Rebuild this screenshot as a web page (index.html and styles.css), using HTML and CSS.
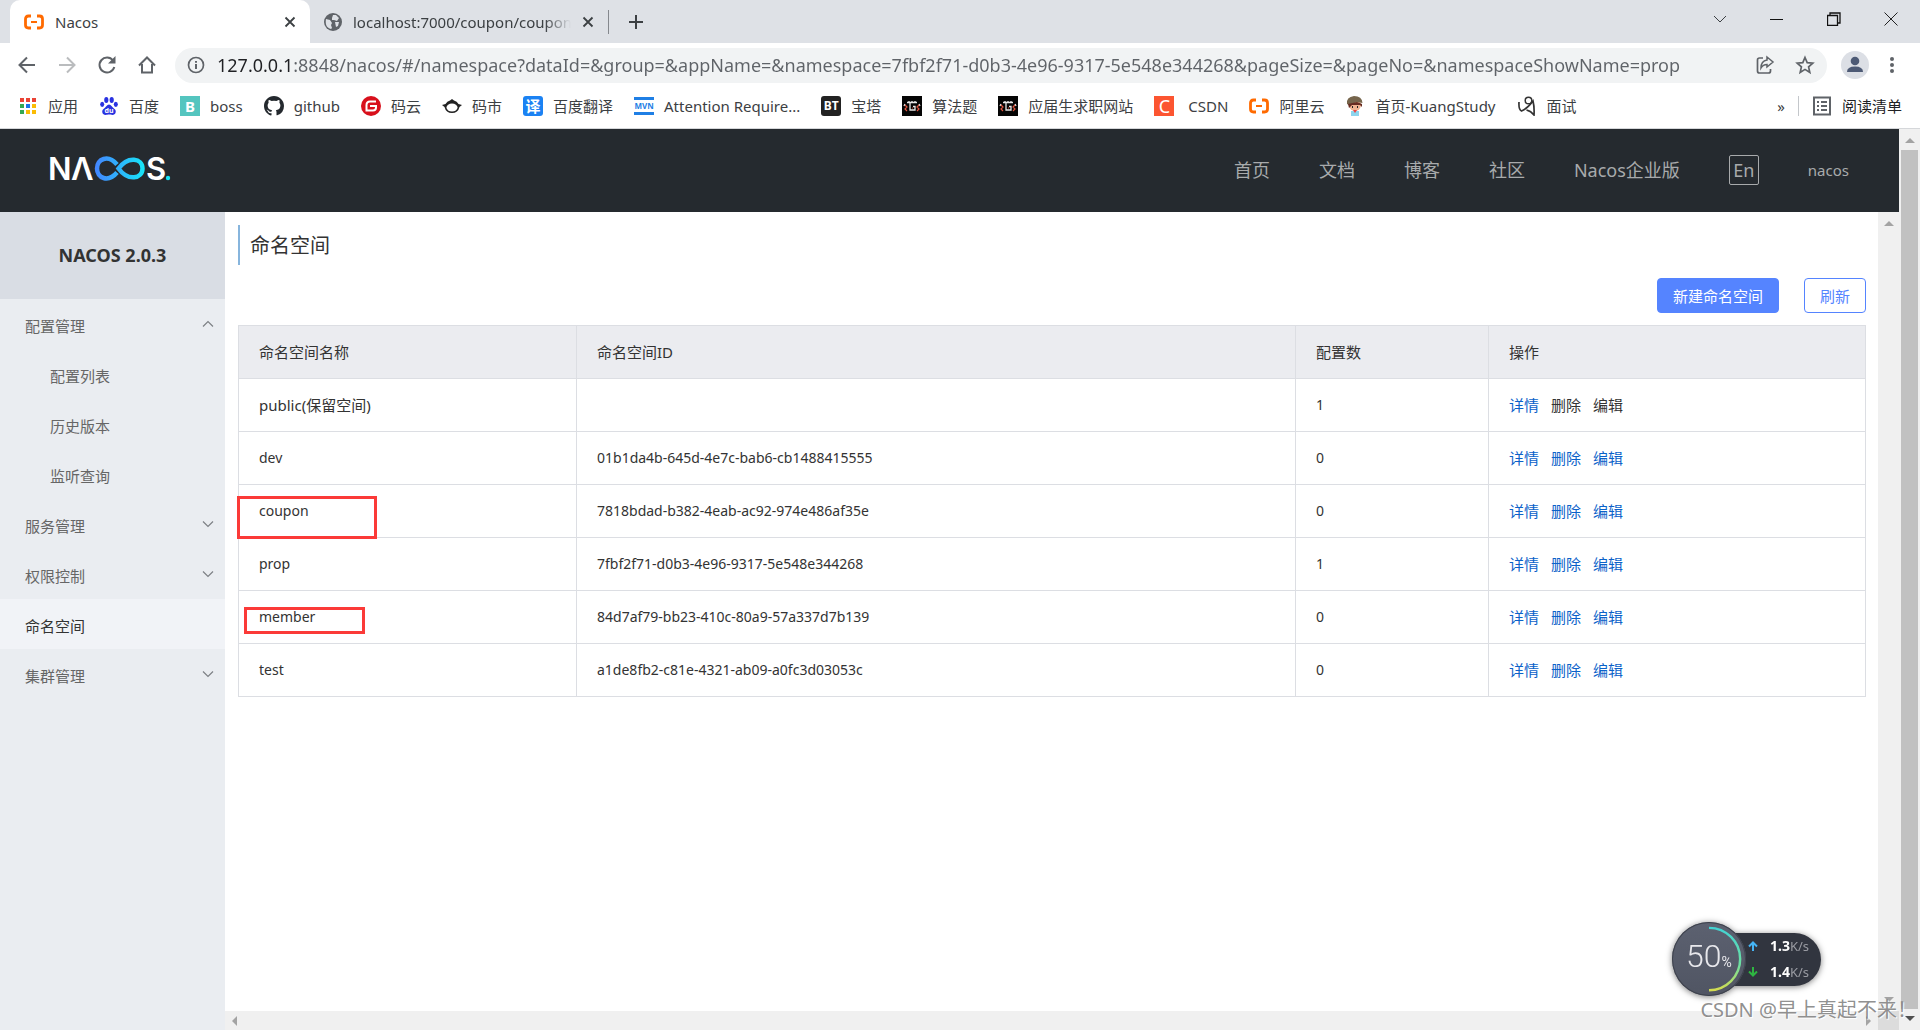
FILE: index.html
```html
<!DOCTYPE html>
<html lang="zh-CN">
<head>
<meta charset="utf-8">
<title>Nacos</title>
<link rel="stylesheet" href="styles.css">
</head>
<body>
<svg class="defs" aria-hidden="true">
  <symbol id="i-aliyun" viewBox="0 0 20 16"><path d="M7 2H4.500Q1.500 2 1.500 5v6Q1.500 14 4.500 14H7M13 2h2.500Q18.500 2 18.500 5v6Q18.500 14 15.500 14H13" fill="none" stroke="#ff6a00" stroke-width="2.800"/><path d="M7 8h6" stroke="#ff6a00" stroke-width="2"/></symbol>
  <symbol id="i-close" viewBox="0 0 12 12"><path d="M1.500 1.500l9 9m0-9l-9 9" stroke="#3c4043" stroke-width="1.800"/></symbol>
  <symbol id="i-chev" viewBox="0 0 12 8"><path d="M1 1.500l5 5 5-5" fill="none" stroke="#7d8085" stroke-width="1.200"/></symbol>
  <symbol id="i-pixel" viewBox="0 0 20 20"><path d="M0 0h20v20H0z" fill="#050505"/><path d="M5 6.500h10M7 5v2m3-2v2m3-2v2M8 7v7h5v-3.500h-2M3 8l-1 2M17 8l1 2" fill="none" stroke="#e8e8e8" stroke-width="1.300"/><path d="M3 9l2 2-2 2 2 2M17 9l-2 2 2 2-2 2M10 12h1" fill="none" stroke="#e2553f" stroke-width="1.200"/></symbol>
</svg>

<header class="browser">
  <div class="tabstrip">
    <div class="tab tab-active">
      <svg class="fav" viewBox="0 0 20 16"><use href="#i-aliyun"/></svg>
      <span class="tab-title">Nacos</span>
      <button class="plain" aria-label="关闭标签"><svg width="12" height="12"><use href="#i-close"/></svg></button>
    </div>
    <div class="tab">
      <svg class="fav globe" viewBox="0 0 18 18"><circle cx="9" cy="9" r="9" fill="#5f6368"/><path d="M2 6l4 1 2 3-1 2 1 3-1 1C3 15 1 12 2 6zM9 2l3 0 3 3-2 3-3-1-2 0 0-2zM11 9l4 0-1 4-2 1z" fill="#dee1e6"/></svg>
      <span class="tab-title fade">localhost:7000/coupon/coupon</span>
      <button class="plain" aria-label="关闭标签"><svg width="12" height="12"><use href="#i-close"/></svg></button>
    </div>
    <span class="tab-sep"></span>
    <button class="plain new-tab" aria-label="新标签页"><svg width="16" height="16" viewBox="0 0 16 16"><path d="M8 1v14M1 8h14" stroke="#3c4043" stroke-width="2"/></svg></button>
    <div class="window-buttons">
      <button class="plain" aria-label="搜索标签"><svg width="14" height="14" viewBox="0 0 14 14"><path d="M1 4l6 6 6-6" fill="none" stroke="#3c4043"/></svg></button>
      <button class="plain" aria-label="最小化"><svg width="14" height="14" viewBox="0 0 14 14"><path d="M0 7.500h13" stroke="#111"/></svg></button>
      <button class="plain" aria-label="还原"><svg width="14" height="14" viewBox="0 0 14 14"><path d="M.5 3.500h10v10H.5zM3 3.500V1h10v10h-2.500" fill="none" stroke="#111" stroke-width="1.300"/></svg></button>
      <button class="plain" aria-label="关闭"><svg width="14" height="14" viewBox="0 0 14 14"><path d="M.5.5l13 13m0-13l-13 13" stroke="#222"/></svg></button>
    </div>
  </div>

  <div class="toolbar">
    <button class="plain" aria-label="后退"><svg width="20" height="20" viewBox="0 0 20 20"><path d="M18 10H3M10 2.500L2.500 10l7.500 7.500" fill="none" stroke="#5f6368" stroke-width="2"/></svg></button>
    <button class="plain" aria-label="前进"><svg width="20" height="20" viewBox="0 0 20 20"><path d="M2 10h15M10 2.500l7.500 7.500-7.500 7.500" fill="none" stroke="#babcbe" stroke-width="2"/></svg></button>
    <button class="plain" aria-label="刷新页面"><svg width="20" height="20" viewBox="0 0 20 20"><path d="M16 5.500A7.500 7.500 0 1 0 17.300 12" fill="none" stroke="#5f6368" stroke-width="2"/><path d="M18.500 1v7.500H11z" fill="#5f6368"/></svg></button>
    <button class="plain" aria-label="主页"><svg width="20" height="20" viewBox="0 0 20 20"><path d="M5 9v8.500h10V9M2 10.500L10 2.500l8 8" fill="none" stroke="#5f6368" stroke-width="2"/></svg></button>
    <div class="omnibox">
      <svg width="18" height="18" viewBox="0 0 18 18"><circle cx="9" cy="9" r="7.500" fill="none" stroke="#5f6368" stroke-width="1.700"/><path d="M9 8v5M9 5v1.800" stroke="#5f6368" stroke-width="2"/></svg>
      <input class="url" aria-label="地址" value="127.0.0.1:8848/nacos/#/namespace?dataId=&amp;group=&amp;appName=&amp;namespace=7fbf2f71-d0b3-4e96-9317-5e548e344268&amp;pageSize=&amp;pageNo=&amp;namespaceShowName=prop">
      <button class="plain" aria-label="分享"><svg width="20" height="20" viewBox="0 0 20 20"><path d="M8 3H4.500Q2.500 3 2.500 5v11q0 2 2 2h9q2 0 2-2v-2" fill="none" stroke="#5f6368" stroke-width="1.700"/><path d="M12 2l6 5-6 5V9.500q-4 0-6 3.500 0-7 6-8z" fill="none" stroke="#5f6368" stroke-width="1.500"/></svg></button>
      <button class="plain" aria-label="收藏"><svg width="20" height="20" viewBox="0 0 20 20"><path d="M10 2.500l2.200 5.200 5.600.5-4.200 3.700 1.200 5.500-4.800-3-4.800 3 1.200-5.500-4.200-3.700 5.600-.5z" fill="none" stroke="#5f6368" stroke-width="1.700"/></svg></button>
    </div>
    <button class="plain avatar" aria-label="用户"><svg width="28" height="28" viewBox="0 0 28 28"><circle cx="14" cy="14" r="14" fill="#dcdfe5"/><circle cx="14" cy="10" r="4.300" fill="#4d5a75"/><path d="M6 21q0-5.500 8-5.500t8 5.500z" fill="#4d5a75"/></svg></button>
    <button class="plain" aria-label="菜单"><svg width="6" height="18" viewBox="0 0 6 18"><g fill="#5f6368"><circle cx="3" cy="3" r="2"/><circle cx="3" cy="9" r="2"/><circle cx="3" cy="15" r="2"/></g></svg></button>
  </div>

  <nav class="bookmarks" aria-label="书签">
    <a href="#"><svg viewBox="0 0 20 20"><path d="M2 2h4v4H2zM8 2h4v4H8zM14 2h4v4h-4z" fill="#ea4335"/><path d="M2 8h4v4H2zM2 14h4v4H2z" fill="#34a853"/><path d="M8 8h4v4H8z" fill="#1a73e8"/><path d="M14 8h4v4h-4zM8 14h4v4H8zM14 14h4v4h-4z" fill="#fbbc04"/></svg>应用</a>
    <a href="#"><svg viewBox="0 0 20 20"><g fill="#2932e1"><ellipse cx="7.300" cy="4" rx="2.100" ry="3"/><ellipse cx="12.700" cy="4" rx="2.100" ry="3"/><ellipse cx="3.200" cy="8.300" rx="2" ry="2.600"/><ellipse cx="16.800" cy="8.300" rx="2" ry="2.600"/><path d="M10 8.500c2 0 3.500 3 5.500 4.500 2.500 2 1 6-2 6-1.500 0-2-.4-3.500-.4s-2 .4-3.500.4c-3 0-4.500-4-2-6C6.500 11.500 8 8.500 10 8.500z"/></g><text x="10" y="17" text-anchor="middle" class="g-du">du</text></svg>百度</a>
    <a href="#"><span class="sq teal">B</span>boss</a>
    <a href="#"><svg viewBox="0 0 16 16"><path fill="#24292e" d="M8 0C3.580 0 0 3.580 0 8c0 3.540 2.290 6.530 5.470 7.590.4.070.55-.17.55-.38v-1.490C3.780 14.200 3.310 12.650 3.310 12.650c-.36-.92-.89-1.170-.89-1.170-.73-.5.050-.49.050-.49.810.06 1.230.83 1.230.83.720 1.230 1.880.87 2.340.67.070-.52.280-.87.510-1.070-1.780-.2-3.640-.89-3.640-3.950 0-.87.310-1.590.820-2.150-.08-.2-.36-1.020.080-2.120 0 0 .67-.21 2.200.82a7.600 7.600 0 0 1 4 0c1.530-1.040 2.200-.82 2.200-.82.440 1.100.160 1.920.080 2.120.510.560.820 1.270.820 2.150 0 3.070-1.870 3.750-3.650 3.950.290.250.540.730.540 1.480v2.200c0 .21.150.46.550.38A8 8 0 0 0 16 8c0-4.420-3.580-8-8-8z"/></svg>github</a>
    <a href="#"><svg viewBox="0 0 20 20"><circle cx="10" cy="10" r="10" fill="#d8101c"/><path d="M15 5.500H9Q5.500 5.500 5.500 9v5.500H12q3 0 3-3V10H9" fill="none" stroke="#fff" stroke-width="2"/></svg>码云</a>
    <a href="#"><svg viewBox="0 0 20 20"><path d="M0 9l3.500-1Q5 5 8 4.500L10 3l2 1.500q3 .5 4.500 3.500L20 9l-2.500 2Q16 17 10 17T2.500 11z" fill="#222"/><ellipse cx="10" cy="11.500" rx="5.500" ry="4" fill="#fff"/></svg>码市</a>
    <a href="#"><span class="sq blue">译</span>百度翻译</a>
    <a href="#"><span class="sq mvn">MVN</span>Attention Require...</a>
    <a href="#"><span class="sq bt">BT</span>宝塔</a>
    <a href="#"><svg viewBox="0 0 20 20"><use href="#i-pixel"/></svg>算法题</a>
    <a href="#"><svg viewBox="0 0 20 20"><use href="#i-pixel"/></svg>应届生求职网站</a>
    <a href="#" class="wide"><span class="sq red">C</span>CSDN</a>
    <a href="#"><svg viewBox="0 0 20 16"><use href="#i-aliyun"/></svg>阿里云</a>
    <a href="#"><svg viewBox="0 0 20 20"><circle cx="10" cy="9" r="6" fill="#f0b391"/><path d="M2 8q-1-7 7-8 8 0 8.500 7L12 6 4 9z" fill="#76654c"/><path d="M3 8l9-2 5 2v3l-2-2-8 0-3 3z" fill="#682d22"/><path d="M6 15h8v5H6z" fill="#8dd5ee"/><path d="M8 14h4l-2 3z" fill="#e44"/><path d="M7 11h1m4 0h1" stroke="#222" stroke-width="2"/></svg>首页-KuangStudy</a>
    <a href="#"><svg viewBox="0 0 20 20"><circle cx="11.500" cy="4.500" r="3.300" fill="none" stroke="#333" stroke-width="1.500"/><path d="M2 6q-.5 8 2.500 9Q10 13 16 5q1.500 6 1 14-3-4-7.500-5" fill="none" stroke="#333" stroke-width="1.700"/></svg>面试</a>
    <span class="more">»</span>
    <a href="#" class="reading"><svg viewBox="0 0 20 20"><rect x="2" y="1.500" width="16" height="17" fill="none" stroke="#5f6368" stroke-width="2"/><path d="M5 6h2m2 0h6M5 10h2m2 0h6M5 14h2m2 0h6" stroke="#5f6368" stroke-width="2"/></svg>阅读清单</a>
  </nav>
</header>

<div class="viewport">
  <div class="page">
    <header class="topbar">
      <a href="#" class="logo" aria-label="Nacos">
        <svg width="122" height="26" viewBox="0 0 122 26"><defs><linearGradient id="inf" gradientUnits="userSpaceOnUse" x1="45" y1="0" x2="95" y2="0"><stop offset="0" stop-color="#4485ff"/><stop offset="1" stop-color="#16e6f8"/></linearGradient></defs>
          <text x="-2" y="24" class="logo-text">N</text><text x="21" y="24" class="logo-text">Λ</text>
          <path d="M67 8.500C58-2 47 3 47 12.500S58 27 67 16.500" fill="none" stroke="url(#inf)" stroke-width="4.500"/>
          <path d="M68.500 12.500C78-.5 92.500 2 92.500 12.500S78 25.500 68.500 12.500z" fill="none" stroke="url(#inf)" stroke-width="4.500"/>
          <text x="96" y="24" class="logo-text">S</text><circle cx="118" cy="22" r="2.200" fill="#16e6f8"/></svg>
      </a>
      <nav class="topnav">
        <a href="#">首页</a><a href="#">文档</a><a href="#">博客</a><a href="#">社区</a><a href="#">Nacos企业版</a>
        <button class="lang">En</button>
        <a href="#" class="user">nacos</a>
      </nav>
    </header>

    <div class="body">
      <aside class="sidebar">
        <h1>NACOS 2.0.3</h1>
        <ul>
          <li><a href="#">配置管理<svg class="up"><use href="#i-chev"/></svg></a></li>
          <li class="sub"><a href="#">配置列表</a></li>
          <li class="sub"><a href="#">历史版本</a></li>
          <li class="sub"><a href="#">监听查询</a></li>
          <li><a href="#">服务管理<svg><use href="#i-chev"/></svg></a></li>
          <li><a href="#">权限控制<svg><use href="#i-chev"/></svg></a></li>
          <li class="active"><a href="#">命名空间</a></li>
          <li><a href="#">集群管理<svg><use href="#i-chev"/></svg></a></li>
        </ul>
      </aside>

      <div class="pane">
        <main>
          <h2>命名空间</h2>
          <div class="actions">
            <button class="btn primary">新建命名空间</button>
            <button class="btn">刷新</button>
          </div>
          <table>
            <thead><tr><th class="c-name">命名空间名称</th><th class="c-id">命名空间ID</th><th class="c-num">配置数</th><th class="c-ops">操作</th></tr></thead>
            <tbody>
              <tr><td class="cjk">public(保留空间)</td><td></td><td>1</td><td class="cjk ops"><a href="#">详情</a><span>删除</span><span>编辑</span></td></tr>
              <tr><td>dev</td><td>01b1da4b-645d-4e7c-bab6-cb1488415555</td><td>0</td><td class="cjk ops"><a href="#">详情</a><a href="#">删除</a><a href="#">编辑</a></td></tr>
              <tr><td class="marked">coupon<span class="mark mark-large"></span></td><td>7818bdad-b382-4eab-ac92-974e486af35e</td><td>0</td><td class="cjk ops"><a href="#">详情</a><a href="#">删除</a><a href="#">编辑</a></td></tr>
              <tr><td>prop</td><td>7fbf2f71-d0b3-4e96-9317-5e548e344268</td><td>1</td><td class="cjk ops"><a href="#">详情</a><a href="#">删除</a><a href="#">编辑</a></td></tr>
              <tr><td class="marked">member<span class="mark mark-small"></span></td><td>84d7af79-bb23-410c-80a9-57a337d7b139</td><td>0</td><td class="cjk ops"><a href="#">详情</a><a href="#">删除</a><a href="#">编辑</a></td></tr>
              <tr><td>test</td><td>a1de8fb2-c81e-4321-ab09-a0fc3d03053c</td><td>0</td><td class="cjk ops"><a href="#">详情</a><a href="#">删除</a><a href="#">编辑</a></td></tr>
            </tbody>
          </table>
        </main>
        <div class="vbar"><span class="arrow up"></span><span class="arrow down"></span></div>
        <div class="hbar"><span class="arrow left"></span><span class="arrow right"></span></div>
        <div class="corner"></div>
      </div>
    </div>
  </div>
  <div class="vbar outer"><span class="arrow up"></span><span class="thumb"></span><span class="arrow down dark"></span></div>
</div>

<div class="monitor">
  <div class="dial">
    <svg width="74" height="74" viewBox="0 0 76 76"><defs><linearGradient id="arc" x1="0" y1="0" x2="0" y2="1"><stop offset="0" stop-color="#42d3d3"/><stop offset=".6" stop-color="#6fe0a0"/><stop offset="1" stop-color="#d4dc50"/></linearGradient></defs><path d="M38 6a32 32 0 0 1 0 64" fill="none" stroke="url(#arc)" stroke-width="2.500"/></svg>
    <span class="pct">50<small>%</small></span>
  </div>
  <div class="rates">
    <p><svg viewBox="0 0 10 10"><path d="M5 10V2M1 5.500l4-4 4 4" fill="none" stroke="#45b4f5" stroke-width="2"/></svg><b>1.3</b>K/s</p>
    <p><svg viewBox="0 0 10 10"><path d="M5 0v8M1 4.500l4 4 4-4" fill="none" stroke="#2eb541" stroke-width="2"/></svg><b>1.4</b>K/s</p>
  </div>
</div>
<div class="watermark">CSDN @早上真起不来！</div>
</body>
</html>
```
FILE: styles.css
```css
* { box-sizing: border-box; }
body {
  margin: 0;
  height: 100vh;
  display: flex;
  flex-direction: column;
  overflow: hidden;
  font: 15px/20px "Noto Sans", "Noto Sans CJK SC", sans-serif;
  color: #333;
  background: #fff;
}
a { color: inherit; text-decoration: none; }
button, input { font: inherit; color: inherit; }
.plain { display: flex; padding: 0; border: 0; background: none; }
.defs { position: absolute; width: 0; height: 0; }
svg { flex: none; display: block; }

/* browser frame */
.browser { flex: none; border-bottom: 1px solid #d5d7da; }
.tabstrip { display: flex; align-items: center; height: 43px; padding-left: 10px; background: #dee1e6; }
.tab { display: flex; align-items: center; height: 43px; width: 298px; padding: 0 14px; gap: 11px; }
.tab-active { width: 300px; background: #fff; border-radius: 10px 10px 0 0; }
.fav { width: 20px; height: 16px; }
.globe { width: 18px; height: 18px; }
.tab-title { flex: 1; overflow: hidden; white-space: nowrap; font-size: 15px; color: #3c4043; }
.fade { mask-image: linear-gradient(to right, #000 88%, transparent); }
.tab-sep { width: 1px; height: 24px; background: #85888d; }
.new-tab { margin-left: 19px; }
.window-buttons { display: flex; gap: 43px; margin: 0 22px 5px auto; }

.toolbar { display: flex; align-items: center; height: 44px; padding: 0 25px 0 17px; gap: 20px; }
.omnibox { flex: 1; display: flex; align-items: center; height: 35px; margin: 0 -6px 0 -2px; padding: 0 12px; gap: 20px; border-radius: 18px; background: #f1f3f4; }
.url {
  flex: 1;
  min-width: 0;
  margin-left: -8px;
  padding: 0;
  border: 0;
  outline: 0;
  font-size: 18px;
  line-height: 28px;
  color: transparent;
  background: linear-gradient(to right, #202124 76px, #5f6368 76px);
  background-clip: text;
}

.bookmarks { display: flex; align-items: center; height: 41px; padding: 0 18px 3px; gap: 21px; color: #3c4043; white-space: nowrap; }
.bookmarks a { display: flex; align-items: center; gap: 10px; }
.bookmarks a > svg { width: 20px; height: 20px; }
.bookmarks .wide { gap: 14px; }
.g-du { font: bold 7px "Noto Sans", sans-serif; fill: #fff; }
.sq { width: 20px; height: 20px; font: bold 15px/20px "Noto Sans", "Noto Sans CJK SC", sans-serif; text-align: center; color: #fff; }
.teal { background: #54c5bf; }
.blue { border-radius: 3px; background: #1b82f3; }
.bt { border-radius: 3px; background: #222; font-size: 12px; }
.red { background: #fc5531; font-size: 18px; font-weight: normal; }
.mvn { height: 18px; border-top: 3px solid #1f7fe5; border-bottom: 3px solid #1f7fe5; font-size: 8px; line-height: 12px; color: #1f7fe5; }
.more { margin-left: auto; }
.bookmarks .reading { height: 20px; margin-left: -8px; padding-left: 13px; border-left: 1px solid #c4c7cb; color: #202124; }

/* page */
.viewport { flex: 1; min-height: 0; display: flex; }
.page { flex: 1; min-width: 0; display: flex; flex-direction: column; }
.topbar { flex: none; display: flex; align-items: center; justify-content: space-between; height: 83px; padding: 0 50px 2px; background: #252a2f; }
.logo { margin-bottom: 2px; }
.logo svg { overflow: visible; }
.logo-text { font: 600 31px Inter, sans-serif; fill: #fff; }
.topnav { display: flex; align-items: center; gap: 49px; font-size: 18px; color: #a8aaac; }
.lang { width: 30px; height: 30px; padding: 0; border: 1px solid #a8aaac; border-radius: 2px; background: none; line-height: 26px; }
.user { font-size: 15px; }

.body { flex: 1; min-height: 0; display: flex; }
.sidebar { flex: none; width: 225px; background: #eaedf1; }
.sidebar h1 { margin: 0; background: #d9dde4; font-size: 18px; font-weight: bold; line-height: 87px; text-align: center; }
.sidebar ul { margin: 0; padding: 0; list-style: none; }
.sidebar a { display: flex; align-items: center; justify-content: space-between; height: 50px; padding: 4px 11px 0 25px; color: #666; }
.sidebar svg { width: 12px; height: 8px; margin-bottom: 4px; }
.sidebar .up { transform: rotate(180deg); }
.sidebar .sub a { padding-left: 50px; }
.sidebar .active a { background: #f1f3f7; color: #333; }

.pane { flex: 1; min-width: 0; display: grid; grid-template-columns: 1fr 21px; grid-template-rows: 1fr 19px; }
main { min-width: 0; padding: 13px 12px 0 13px; }
h2 { margin: 0; padding: 2px 0 0 10px; border-left: 2px solid #87b5dd; font-size: 20px; font-weight: normal; line-height: 38px; }
.actions { display: flex; justify-content: flex-end; gap: 25px; margin: 13px 0 12px; }
.btn { height: 35px; padding: 0 15px; border: 1px solid #5584ff; border-radius: 4px; background: #fff; color: #5584ff; }
.primary { background: #5584ff; color: #fff; }

table { width: 100%; border-collapse: collapse; table-layout: fixed; }
th, td { height: 53px; padding: 0 20px; border: 1px solid #dcdee3; font-weight: normal; text-align: left; }
th { background: #ebecf0; }
td { font-size: 14px; }
.cjk { font-size: 15px; }
.c-name { width: 338px; }
.c-num { width: 193px; }
.c-ops { width: 377px; }
.ops a { color: #0b62c9; }
.ops > * { margin-right: 12px; }
.marked { position: relative; }
.mark { position: absolute; border: 3px solid #fb3a38; }
.mark-large { left: -2px; top: 11px; width: 140px; height: 43px; }
.mark-small { left: 5px; top: 16px; width: 121px; height: 27px; }

/* scroll bars */
.vbar, .hbar { display: flex; justify-content: space-between; align-items: center; background: #f0f0f0; }
.vbar { flex-direction: column; padding: 9px 0; }
.hbar { padding: 0 7px; }
.corner { background: #dcdcdc; }
.pane .vbar { grid-column: 2; grid-row: 1; }
.outer { flex: none; width: 21px; gap: 7px; }
.thumb { flex: 1; width: 17px; background: #c1c1c1; }
.arrow { border: 5px solid transparent; }
.arrow.up { border-top: 0; border-bottom-color: #a3a3a3; }
.arrow.down { border-bottom: 0; border-top-color: #a3a3a3; }
.arrow.left { border-left: 0; border-right-color: #a3a3a3; }
.arrow.right { border-right: 0; border-left-color: #a3a3a3; }
.arrow.dark { border-top-color: #505050; }

/* floating network monitor */
.monitor { position: absolute; right: 99px; bottom: 34px; display: flex; align-items: center; filter: drop-shadow(0 1px 3px rgba(0, 0, 0, .5)); color: #9a9ca3; }
.dial { position: relative; z-index: 1; display: grid; place-items: center; width: 74px; height: 74px; border-radius: 50%; background: linear-gradient(#5c6170, #505563); box-shadow: inset 0 0 0 1px #3e424d; }
.dial > * { grid-area: 1 / 1; }
.pct { font: 300 32px/40px Roboto, sans-serif; color: #e8e8ec; }
.pct small { font-size: 14px; font-weight: 400; }
.rates { width: 98px; height: 53px; margin-left: -23px; padding-left: 25px; border-radius: 0 27px 27px 0; background: #31353f; white-space: nowrap; }
.rates p { display: flex; align-items: center; height: 26px; margin: 0; font-size: 13px; }
.rates svg { width: 10px; height: 10px; margin-right: 12px; }
.rates b { font-size: 14px; color: #fff; }

.watermark { position: absolute; right: 3px; bottom: 6px; z-index: 2; font-size: 20px; line-height: 28px; color: rgba(130, 130, 130, .9); text-shadow: 1px 1px 1px #fff; }
```
